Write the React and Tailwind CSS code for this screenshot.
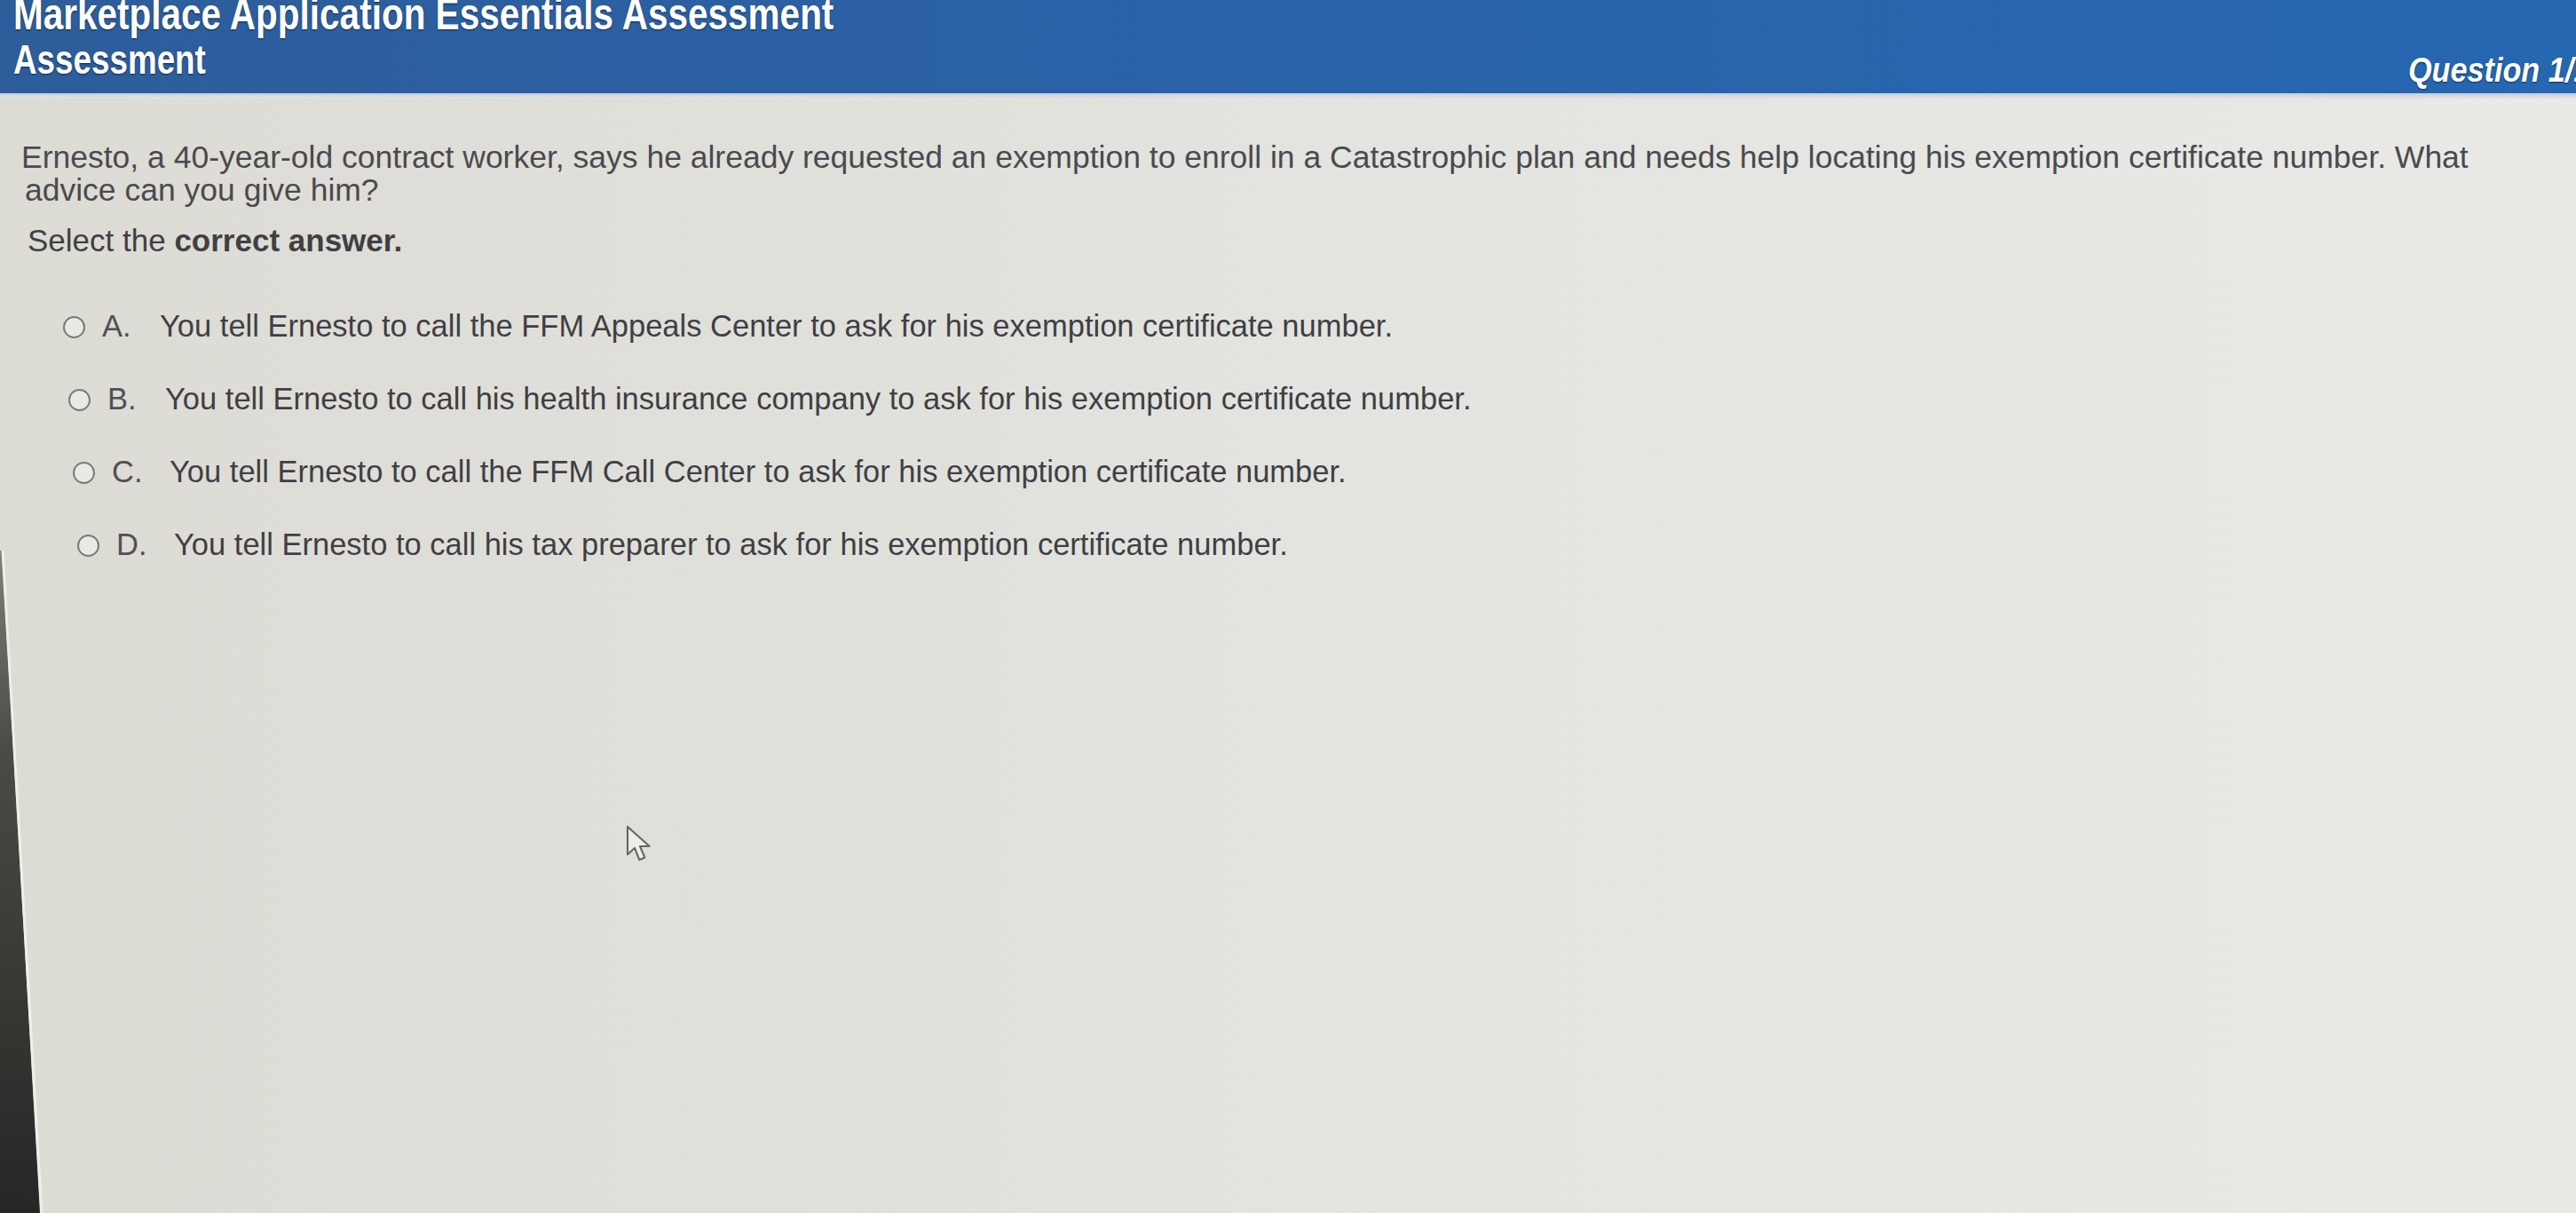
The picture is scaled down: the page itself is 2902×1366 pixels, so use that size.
import React from 'react';

const options = [
    { letter: 'A.', text: 'You tell Ernesto to call the FFM Appeals Center to ask for his exemption certificate number.', pad: 'pl-[47px]' },
    { letter: 'B.', text: 'You tell Ernesto to call his health insurance company to ask for his exemption certificate number.', pad: 'pl-[53px]' },
    { letter: 'C.', text: 'You tell Ernesto to call the FFM Call Center to ask for his exemption certificate number.', pad: 'pl-[58px]' },
    { letter: 'D.', text: 'You tell Ernesto to call his tax preparer to ask for his exemption certificate number.', pad: 'pl-[63px]' },
];

const Cursor = () => (
    <svg className="absolute left-[705px] top-[929px]" width="32" height="44" viewBox="0 0 24 33" fill="none">
        <path d="M1.5 1.5 L1.5 25 L7.5 19.5 L11.5 29.5 L16 27.5 L12 18 L20 18 Z" fill="#ecece9" stroke="#666" strokeWidth="1.6" strokeLinejoin="round" />
    </svg>
);

const Bezel = () => (
    <svg className="absolute inset-0 pointer-events-none" width="2902" height="1366" viewBox="0 0 2902 1366">
        <defs>
            <linearGradient id="bz" x1="0" y1="0" x2="0" y2="1">
                <stop offset="0" stopColor="#808079" />
                <stop offset="0.3" stopColor="#4a4a46" />
                <stop offset="1" stopColor="#262624" />
            </linearGradient>
        </defs>
        <polygon points="0,620 2,620 45,1366 0,1366" fill="url(#bz)" />
        <line x1="3" y1="620" x2="47" y2="1366" stroke="#eeeeeb" strokeWidth="3" />
    </svg>
);

const App = () => {
    return (
        <div className="relative w-[2902px] h-[1366px] overflow-hidden bg-gradient-to-r from-[#dcdbd4] via-[#e3e3df] to-[#e9e9e6] font-['Liberation_Sans',Arial,sans-serif]">
            <header className="h-[105px] flex justify-between overflow-hidden bg-gradient-to-r from-[#2d5d9b] via-[#2a62a8] to-[#2667b2] text-white [text-shadow:0_1px_2px_rgba(0,0,0,0.55)]">
                <div className="pl-[15px]">
                    <div className="-mt-[9px] text-[50px] leading-none font-bold whitespace-nowrap origin-left scale-x-[0.81]">Marketplace Application Essentials Assessment</div>
                    <div className="mt-[3px] text-[46px] leading-none font-bold whitespace-nowrap origin-left scale-x-[0.8]">Assessment</div>
                </div>
                <div className="w-[189px] shrink-0 pt-[60px]">
                    <div className="text-[38px] leading-none font-bold italic whitespace-nowrap origin-left scale-x-[0.9]">Question 1/1</div>
                </div>
            </header>
            <div className="h-[6px] bg-gradient-to-b from-[#c4cfdd] to-[#e3e4e1]" />

            <main className="pt-[48px] pl-[24px] text-[#4a4a4e]">
                <p className="text-[35.5px] leading-[37px] whitespace-nowrap">
                    Ernesto, a 40-year-old contract worker, says he already requested an exemption to enroll in a Catastrophic plan and needs help locating his exemption certificate number. What
                    <br />
                    <span className="pl-[4px]">advice can you give him?</span>
                </p>
                <p className="mt-[21px] pl-[7px] text-[35px] leading-[34px] text-[#404044]">
                    Select the <span className="font-bold">correct answer.</span>
                </p>

                <div className="mt-[39px] flex flex-col">
                    {options.map(opt => (
                        <label key={opt.letter} className={`h-[82px] flex items-center ${opt.pad} text-[34.5px] text-[#3f3f44]`}>
                            <span className="w-[25px] h-[25px] rounded-full border-[2.5px] border-[#7a7a78] bg-[#e9e9e6] shrink-0" />
                            <span className="ml-[19px] w-[65px] shrink-0 text-[#505054]">{opt.letter}</span>
                            <span className="whitespace-nowrap">{opt.text}</span>
                        </label>
                    ))}
                </div>
            </main>

            <Cursor />
            <Bezel />
        </div>
    );
};

export default App;
